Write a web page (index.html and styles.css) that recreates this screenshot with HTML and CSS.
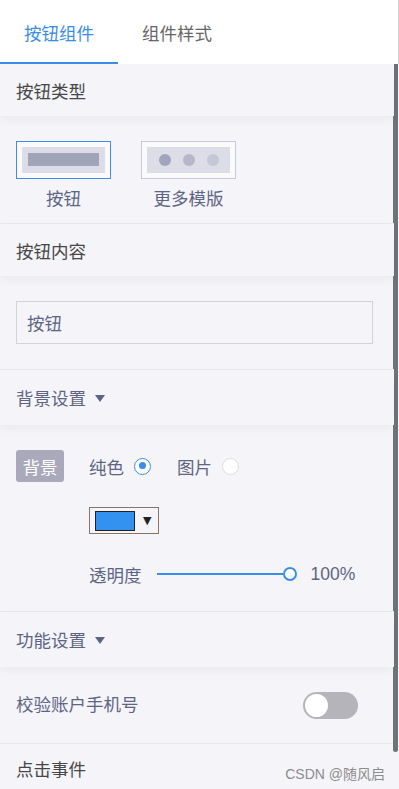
FILE: index.html
```html
<!DOCTYPE html>
<html lang="zh">
<head>
<meta charset="utf-8">
<link rel="stylesheet" href="styles.css">
</head>
<body>
<div class="tabs">
  <div class="tab active">按钮组件</div>
  <div class="tab">组件样式</div>
</div>
<div class="main">
  <div class="content">
    <div class="sec-head dark h52">按钮类型</div>
    <div class="types">
      <div class="type">
        <div class="card selected"><div class="inner"><div class="bar"></div></div></div>
        <div class="type-label">按钮</div>
      </div>
      <div class="type">
        <div class="card"><div class="inner dots"><span class="dot d1"></span><span class="dot d2"></span><span class="dot d3"></span></div></div>
        <div class="type-label">更多模版</div>
      </div>
    </div>
    <div class="sec-head dark h53">按钮内容</div>
    <div class="input-block">
      <div class="input">按钮</div>
    </div>
    <div class="sec-head h56">背景设置 <span class="caret"></span></div>
    <div class="bg-block">
      <div class="bg-row">
        <span class="badge">背景</span>
        <span class="opt">纯色</span>
        <span class="radio checked"></span>
        <span class="opt opt2">图片</span>
        <span class="radio"></span>
      </div>
      <div class="picker"><span class="swatch"></span><span class="pick-caret">▼</span></div>
      <div class="slider-row">
        <span class="opt">透明度</span>
        <div class="slider"><span class="track"></span><span class="thumb"></span></div>
        <span class="pct">100%</span>
      </div>
    </div>
    <div class="sec-head h56">功能设置 <span class="caret"></span></div>
    <div class="toggle-row">
      <span class="opt">校验账户手机号</span>
      <span class="toggle"><span class="knob"></span></span>
    </div>
    <div class="event-row">点击事件</div>
  </div>
  <div class="scrollbar"></div>
  <div class="watermark">CSDN @随风启</div>
</div>
</body>
</html>
```
FILE: styles.css
```css
* { box-sizing: border-box; }
html, body {
  margin: 0;
  padding: 0;
  width: 399px;
  height: 789px;
  overflow: hidden;
  background: #f4f4f9;
  font-family: "Noto Sans CJK SC", "Liberation Sans", sans-serif;
  font-size: 17.5px;
  color: #5e6584;
}
.tabs {
  height: 64px;
  background: #fff;
  display: flex;
  border-right: 1px solid #d4d4d8;
  position: relative;
  z-index: 3;
}
.tab {
  width: 118px;
  display: flex;
  align-items: center;
  justify-content: center;
  color: #666;
  font-size: 17.5px;
  border-bottom: 2px solid transparent;
  padding-top: 2px;
}
.tab.active {
  color: #3a8ee6;
  border-bottom-color: #3a8ee6;
}
.main {
  position: relative;
  height: 725px;
}
.content {
  width: 394px;
}
.sec-head {
  display: flex;
  align-items: center;
  padding-left: 16px;
  background: #f4f4f9;
  box-shadow: 0 4px 8px rgba(0, 0, 0, 0.045);
  position: relative;
  z-index: 2;
  border-top: 1px solid #e6e6ec;
}
.sec-head.dark { color: #474747; }
.h52 { height: 52px; }
.h53 { height: 53px; }
.h56 { height: 56px; }
.content > .sec-head:first-child { border-top: none; }
.caret {
  display: inline-block;
  width: 0;
  height: 0;
  margin-left: 9px;
  border-left: 5px solid transparent;
  border-right: 5px solid transparent;
  border-top: 7px solid #5e6584;
  margin-top: 2px;
}
.types {
  display: flex;
  gap: 30px;
  padding: 25px 16px 0;
  height: 107px;
}
.type {
  display: flex;
  flex-direction: column;
  align-items: center;
}
.card {
  width: 95px;
  height: 38px;
  border: 1px solid #c8c9d6;
  background: #fafafc;
  padding: 5px;
}
.card.selected { border-color: #3a8ee6; }
.inner {
  background: #dcdde7;
  height: 26px;
  padding: 6px 6px;
}
.bar {
  background: #a0a5b9;
  height: 13px;
}
.dots {
  display: flex;
  align-items: center;
  justify-content: center;
  gap: 12px;
  padding: 0;
}
.dot {
  width: 12px;
  height: 12px;
  border-radius: 50%;
}
.d1 { background: #a0a5b9; }
.d2 { background: #b5b8ca; }
.d3 { background: #c6c7d5; }
.type-label {
  margin-top: 6px;
  line-height: 26px;
}
.input-block {
  padding: 25px 21px 25px 16px;
}
.input {
  height: 43px;
  border: 1px solid #d3d3d6;
  padding-left: 10px;
  display: flex;
  align-items: center;
}
.bg-block {
  padding: 25px 16px 0;
  height: 186px;
}
.bg-row {
  display: flex;
  align-items: center;
  height: 32px;
}
.badge {
  width: 48px;
  height: 32px;
  background: #a9a9bb;
  color: #fff;
  border-radius: 3px;
  display: flex;
  align-items: center;
  justify-content: center;
  margin-right: 25px;
}
.radio {
  width: 17px;
  height: 17px;
  border-radius: 50%;
  background: #fff;
  border: 1px solid #dcdce2;
  margin-left: 10px;
  position: relative;
}
.radio.checked {
  border: 1.5px solid #3a8ee6;
}
.radio.checked::after {
  content: "";
  position: absolute;
  left: 3.5px;
  top: 3.5px;
  width: 7px;
  height: 7px;
  border-radius: 50%;
  background: #3a8ee6;
}
.opt2 { margin-left: 26px; }
.picker {
  margin: 25px 0 0 73px;
  width: 70px;
  height: 27px;
  border: 1px solid #8b7463;
  display: flex;
  align-items: center;
  padding-left: 5px;
}
.swatch {
  width: 40px;
  height: 20px;
  background: #3391ef;
  border: 1px solid #222;
}
.pick-caret {
  color: #222;
  font-size: 11px;
  margin-left: 8px;
  font-family: "DejaVu Sans", sans-serif;
}
.slider-row {
  display: flex;
  align-items: center;
  margin: 27px 0 0 73px;
  height: 26px;
}
.slider {
  position: relative;
  width: 140px;
  height: 16px;
  margin-left: 15px;
  display: flex;
  align-items: center;
}
.track {
  width: 126px;
  height: 2px;
  background: #3a8ee6;
}
.thumb {
  width: 14px;
  height: 14px;
  border-radius: 50%;
  background: #fff;
  border: 2px solid #3a8ee6;
}
.pct {
  margin-left: 14px;
  font-family: "Liberation Sans", sans-serif;
  font-size: 17.5px;
}
.toggle-row {
  display: flex;
  align-items: center;
  justify-content: space-between;
  padding: 0 36px 0 16px;
  height: 76px;
}
.toggle-row .opt { margin-top: -3px; }
.toggle {
  width: 55px;
  height: 27px;
  border-radius: 14px;
  background: #b5b4ba;
  padding: 2px;
  display: flex;
}
.knob {
  width: 23px;
  height: 23px;
  border-radius: 50%;
  background: #fff;
}
.event-row {
  border-top: 1px solid #e6e6ec;
  padding: 12px 16px 0;
  color: #474747;
  height: 60px;
}
.scrollbar {
  position: absolute;
  top: 0;
  right: 1px;
  width: 5px;
  height: 688px;
  background: #6c747b;
  border-radius: 0 0 3px 3px;
}
.watermark {
  position: absolute;
  right: 14px;
  bottom: 6px;
  font-size: 14px;
  color: #8c8c8c;
  font-family: "Liberation Sans", "Noto Sans CJK SC", sans-serif;
}
```
